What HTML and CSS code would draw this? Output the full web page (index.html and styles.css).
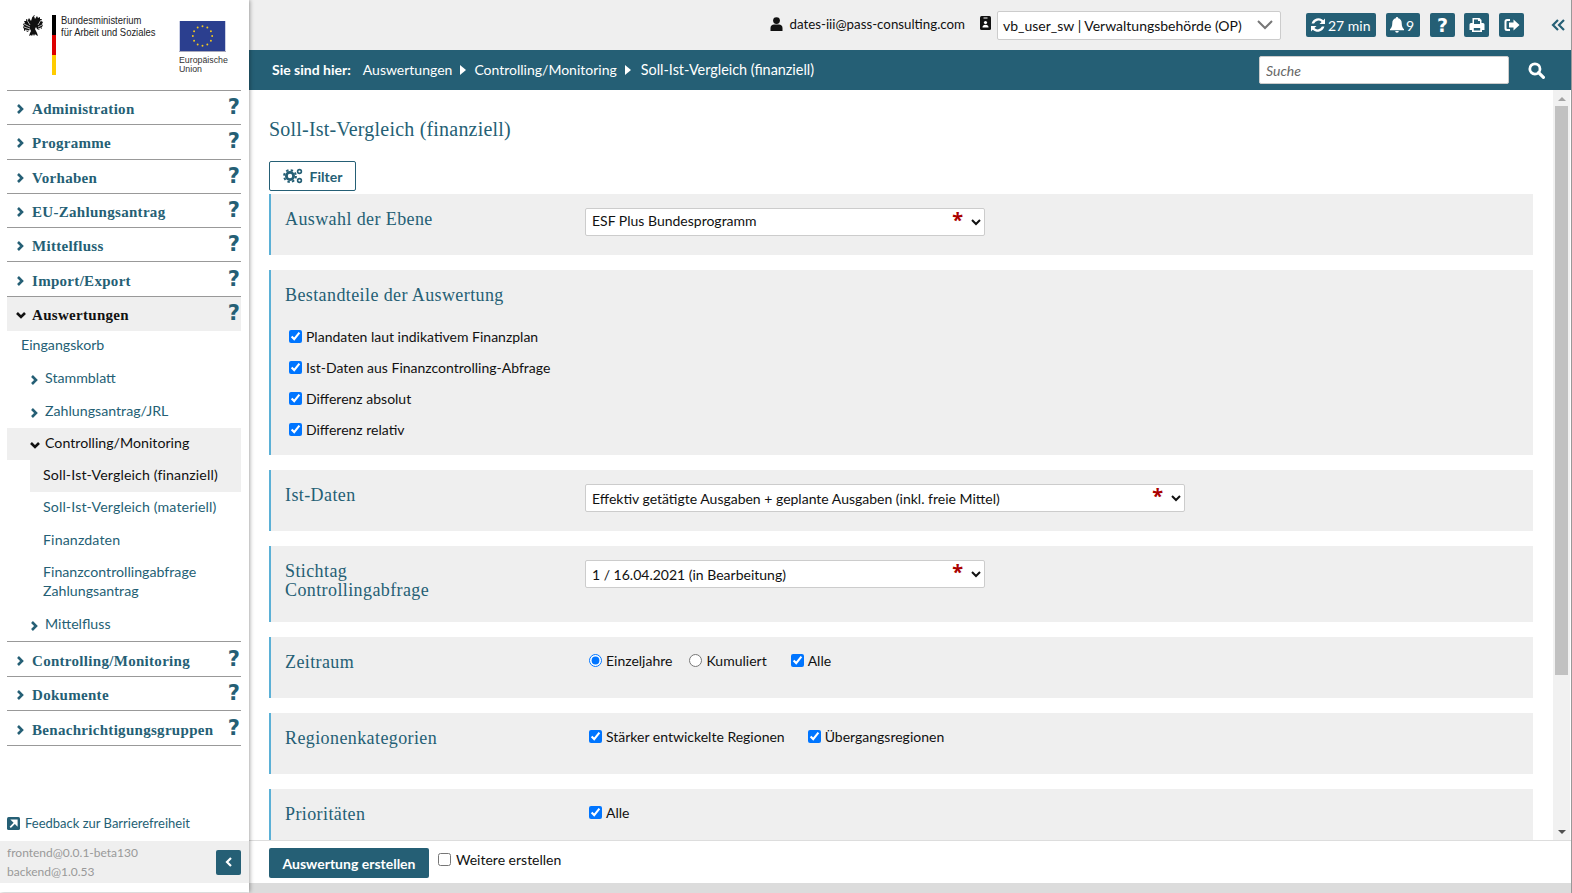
FILE: index.html
```html
<!DOCTYPE html>
<html lang="de">
<head>
  <meta charset="UTF-8">
  <title>Soll-Ist-Vergleich (finanziell)</title>
  <link rel="stylesheet" href="styles.css">
</head>
<body>
<div class="app">

  <!-- Seitenleiste -->
  <aside class="sidebar">
    <div class="logos">
      <div class="logo-bmas">
        <svg class="eagle" viewBox="0 0 24 24" width="24" height="24">
          <path d="M12 1c-1 0-2 1-2 2l-1 3-2-3-1 2-2-1 0 2-2 0 1 2-2 1 1 2-1 1 1 2 0 2 2-1 1 2 2-1 1-2 1 2-1 2-1 3 2-1 1 1 1-2 1 2 1-2 1 1 2 1-1-3-1-2-1-2 1-2 1 2 2 1 1-2 2 1 0-2 1-2-1-1 1-2-2-1 1-2-2 0 0-2-2 1-1-2-2 3-1-3 1-1-2-1z" fill="#111"/>
          <path d="M2 9l6 3M2 12l6 2M3 15l5 1M22 9l-6 3M22 12l-6 2M21 15l-5 1M5 5l3 5M19 5l-3 5" stroke="#fff" stroke-width=".7"/>
        </svg>
        <div class="flagbar"><span class="fb-black"></span><span class="fb-red"></span><span class="fb-gold"></span></div>
        <div class="logo-text">Bundesministerium<br>für Arbeit und Soziales</div>
      </div>
      <div class="logo-eu">
        <svg class="euflag" viewBox="0 0 47 31" width="47" height="31">
          <rect width="47" height="31" fill="#2b3f8f"/>
          <g fill="#f3c81f">
            <circle cx="23.5" cy="5.5" r="1"/><circle cx="28.5" cy="6.8" r="1"/><circle cx="32.2" cy="10.5" r="1"/>
            <circle cx="33.5" cy="15.5" r="1"/><circle cx="32.2" cy="20.5" r="1"/><circle cx="28.5" cy="24.2" r="1"/>
            <circle cx="23.5" cy="25.5" r="1"/><circle cx="18.5" cy="24.2" r="1"/><circle cx="14.8" cy="20.5" r="1"/>
            <circle cx="13.5" cy="15.5" r="1"/><circle cx="14.8" cy="10.5" r="1"/><circle cx="18.5" cy="6.8" r="1"/>
          </g>
        </svg>
        <div class="logo-text-eu">Europäische<br>Union</div>
      </div>
    </div>

    <nav class="menu">
      <div class="menu-row"><svg class="chev" viewBox="0 0 8 10"><path d="M2 1l4 4-4 4" /></svg><a>Administration</a><span class="help">?</span></div>
      <div class="menu-row"><svg class="chev" viewBox="0 0 8 10"><path d="M2 1l4 4-4 4" /></svg><a>Programme</a><span class="help">?</span></div>
      <div class="menu-row"><svg class="chev" viewBox="0 0 8 10"><path d="M2 1l4 4-4 4" /></svg><a>Vorhaben</a><span class="help">?</span></div>
      <div class="menu-row"><svg class="chev" viewBox="0 0 8 10"><path d="M2 1l4 4-4 4" /></svg><a>EU-Zahlungsantrag</a><span class="help">?</span></div>
      <div class="menu-row"><svg class="chev" viewBox="0 0 8 10"><path d="M2 1l4 4-4 4" /></svg><a>Mittelfluss</a><span class="help">?</span></div>
      <div class="menu-row"><svg class="chev" viewBox="0 0 8 10"><path d="M2 1l4 4-4 4" /></svg><a>Import/Export</a><span class="help">?</span></div>
      <div class="menu-row open"><svg class="chev" viewBox="0 0 10 8"><path d="M1 2l4 4 4-4" /></svg><a>Auswertungen</a><span class="help">?</span></div>

      <div class="submenu">
        <div class="sub-plain">Eingangskorb</div>
        <div class="sub-row"><svg class="chev" viewBox="0 0 8 10"><path d="M2 1l4 4-4 4" /></svg>Stammblatt</div>
        <div class="sub-row"><svg class="chev" viewBox="0 0 8 10"><path d="M2 1l4 4-4 4" /></svg>Zahlungsantrag/JRL</div>
        <div class="sub-row active"><svg class="chev" viewBox="0 0 10 8"><path d="M1 2l4 4 4-4" /></svg>Controlling/Monitoring</div>
        <div class="sub-leaf current">Soll-Ist-Vergleich (finanziell)</div>
        <div class="sub-leaf">Soll-Ist-Vergleich (materiell)</div>
        <div class="sub-leaf">Finanzdaten</div>
        <div class="sub-leaf two">Finanzcontrollingabfrage Zahlungsantrag</div>
        <div class="sub-row"><svg class="chev" viewBox="0 0 8 10"><path d="M2 1l4 4-4 4" /></svg>Mittelfluss</div>
      </div>

      <div class="menu-row first-after"><svg class="chev" viewBox="0 0 8 10"><path d="M2 1l4 4-4 4" /></svg><a>Controlling/Monitoring</a><span class="help">?</span></div>
      <div class="menu-row"><svg class="chev" viewBox="0 0 8 10"><path d="M2 1l4 4-4 4" /></svg><a>Dokumente</a><span class="help">?</span></div>
      <div class="menu-row"><svg class="chev" viewBox="0 0 8 10"><path d="M2 1l4 4-4 4" /></svg><a>Benachrichtigungsgruppen</a><span class="help">?</span></div>
    </nav>

    <div class="feedback">
      <svg viewBox="0 0 12 12" width="13" height="13"><rect width="12" height="12" rx="1.5" fill="#255f75"/><path d="M3 9.5L8 4.5M5 3h4v4z" stroke="#fff" stroke-width="1.6" fill="#fff"/></svg>
      Feedback zur Barrierefreiheit
    </div>
    <div class="versions">
      <div class="version-text">frontend@0.0.1-beta130<br>backend@1.0.53</div>
      <button class="collapse"><svg viewBox="0 0 8 10" width="8" height="10"><path d="M6 1L2 5l4 4" fill="none" stroke="#fff" stroke-width="2.2"/></svg></button>
    </div>
  </aside>

  <div class="main">
    <!-- Kopfzeile mit Benutzer und Aktionen -->
    <header class="topbar">
      <svg class="top-icon user" viewBox="0 0 12 14" width="13" height="14"><circle cx="6" cy="3.6" r="3.4" fill="#111"/><path d="M0 14v-3c0-2 1.500-3.500 3.500-3.500h5c2 0 3.500 1.500 3.500 3.500v3z" fill="#111"/></svg>
      <span class="user-mail">dates-iii@pass-consulting.com</span>
      <svg class="top-icon badge" viewBox="0 0 11 14" width="11" height="14"><rect width="11" height="14" rx="1.500" fill="#111"/><rect x="3.500" y="1.500" width="4" height="1" fill="#fff"/><circle cx="5.500" cy="6.500" r="1.600" fill="#fff"/><path d="M2.500 11.500c0-2 1-2.800 3-2.800s3 .8 3 2.800z" fill="#fff"/></svg>
      <div class="role-select"><span>vb_user_sw | Verwaltungsbehörde (OP)</span>
        <svg viewBox="0 0 16 10" width="16" height="10"><path d="M1 1l7 7 7-7" fill="none" stroke="#777" stroke-width="2"/></svg>
      </div>
      <button class="top-btn timer">
        <svg viewBox="0 0 16 16" width="16" height="16"><path d="M13.300 3.300A7 7 0 0 0 1.600 6.400h2.500a4.600 4.600 0 0 1 7.500-1.400L9.500 7H15V1.500zM2.700 12.700A7 7 0 0 0 14.400 9.600h-2.500a4.600 4.600 0 0 1-7.500 1.400L6.500 9H1v5.500z" fill="#fff"/></svg>
        27 min</button>
      <button class="top-btn bell">
        <svg viewBox="0 0 14 16" width="14" height="16"><path d="M7 0a1.200 1.200 0 0 0-1.200 1.300C3.500 1.800 2.300 3.600 2.300 6c0 3.500-1 5-2.300 6.300v.9h14v-.9C12.700 11 11.700 9.500 11.700 6c0-2.400-1.200-4.200-3.500-4.700A1.200 1.200 0 0 0 7 0zM5.200 14a1.800 1.800 0 0 0 3.600 0z" fill="#fff"/></svg>
        9</button>
      <button class="top-btn icon-only q">?</button>
      <button class="top-btn icon-only">
        <svg viewBox="0 0 16 16" width="16" height="16"><path d="M3.500 1h7l2 2v3h1.500A1.500 1.500 0 0 1 15.500 7.500V13H13v2H3v-2H.5V7.500A1.500 1.500 0 0 1 2 6h1.500zM5 2.500V7h6V4h-2V2.500zM4.800 11v2.500h6.400V11z" fill="#fff" fill-rule="evenodd"/></svg>
      </button>
      <button class="top-btn icon-only">
        <svg viewBox="0 0 16 14" width="16" height="14"><path d="M6 1H3a2.500 2.500 0 0 0-2.500 2.500v7A2.500 2.500 0 0 0 3 13h3v-2H3.200a.7.7 0 0 1-.7-.7V3.700a.7.700 0 0 1 .7-.7H6zM9.500 1.500L15.500 7l-6 5.500V9.500H5v-5h4.500z" fill="#fff"/></svg>
      </button>
      <svg class="nav-collapse" viewBox="0 0 15 12" width="15" height="12"><path d="M7 1L2 6l5 5M13 1L8 6l5 5" fill="none" stroke="#255f75" stroke-width="2.200"/></svg>
    </header>

    <div class="crumbbar">
      <strong>Sie sind hier:</strong>
      <span class="crumb">Auswertungen</span><i class="tri"></i>
      <span class="crumb">Controlling/Monitoring</span><i class="tri"></i>
      <span class="crumb last">Soll-Ist-Vergleich (finanziell)</span>
      <input class="search" type="text" placeholder="Suche">
      <svg class="search-icon" viewBox="0 0 16 16" width="17" height="17"><circle cx="6.500" cy="6.500" r="4.800" fill="none" stroke="#fff" stroke-width="2.600"/><path d="M10 10l4.500 4.500" stroke="#fff" stroke-width="3" stroke-linecap="round"/></svg>
    </div>

    <div class="body-row">
      <main class="content">
        <h1>Soll-Ist-Vergleich (finanziell)</h1>
        <button class="filter-btn">
          <svg viewBox="0 0 20 16" width="20" height="16">
            <g fill="none" stroke="#255f75">
              <circle cx="7" cy="8" r="3.600" stroke-width="2.800"/>
              <circle cx="7" cy="8" r="5.900" stroke-width="2" stroke-dasharray="2.400 2.230"/>
              <circle cx="16.500" cy="3.500" r="1.900" stroke-width="1.600"/>
              <circle cx="16.500" cy="12.500" r="1.900" stroke-width="1.600"/>
            </g>
          </svg>
          Filter
        </button>

        <section class="panel first">
          <h2>Auswahl der Ebene</h2>
          <div class="field"><div class="select-wrap"><select class="sel-short"><option>ESF Plus Bundesprogramm</option></select><span class="req">*</span></div></div>
        </section>

        <section class="panel stacked">
          <h2>Bestandteile der Auswertung</h2>
          <label class="check-line"><input type="checkbox" checked>Plandaten laut indikativem Finanzplan</label>
          <label class="check-line"><input type="checkbox" checked>Ist-Daten aus Finanzcontrolling-Abfrage</label>
          <label class="check-line"><input type="checkbox" checked>Differenz absolut</label>
          <label class="check-line"><input type="checkbox" checked>Differenz relativ</label>
        </section>

        <section class="panel">
          <h2>Ist-Daten</h2>
          <div class="field"><div class="select-wrap"><select class="sel-long"><option>Effektiv getätigte Ausgaben + geplante Ausgaben (inkl. freie Mittel)</option></select><span class="req">*</span></div></div>
        </section>

        <section class="panel tall">
          <h2>Stichtag<br>Controllingabfrage</h2>
          <div class="field"><div class="select-wrap"><select class="sel-short"><option>1 / 16.04.2021 (in Bearbeitung)</option></select><span class="req">*</span></div></div>
        </section>

        <section class="panel">
          <h2 class="low">Zeitraum</h2>
          <div class="field inline">
            <label class="opt"><input type="radio" name="zeit" checked>Einzeljahre</label>
            <label class="opt"><input type="radio" name="zeit">Kumuliert</label>
            <label class="opt wide"><input type="checkbox" checked>Alle</label>
          </div>
        </section>

        <section class="panel">
          <h2 class="low">Regionenkategorien</h2>
          <div class="field inline">
            <label class="opt"><input type="checkbox" checked>Stärker entwickelte Regionen</label>
            <label class="opt mid"><input type="checkbox" checked>Übergangsregionen</label>
          </div>
        </section>

        <section class="panel">
          <h2 class="low">Prioritäten</h2>
          <div class="field inline">
            <label class="opt"><input type="checkbox" checked>Alle</label>
          </div>
        </section>
      </main>

      <div class="scrollbar">
        <i class="arrow-up"></i>
        <div class="thumb"></div>
        <i class="arrow-down"></i>
      </div>
    </div>

    <footer class="actions">
      <button class="primary">Auswertung erstellen</button>
      <label class="more"><input type="checkbox">Weitere erstellen</label>
    </footer>
    <div class="bottom-strip"></div>
  </div>
</div>
</body>
</html>
```

FILE: styles.css
```css
* {
  box-sizing: border-box;
}

html, body {
  margin: 0;
  height: 893px;
  overflow: hidden;
}

body {
  font-family: "Lato", sans-serif;
  font-size: 14px;
  color: #111;
  background: #fff;
}

button {
  font-family: inherit;
  border: 0;
  white-space: nowrap;
}

.app {
  display: flex;
  height: 893px;
}

/* Seitenleiste */
.sidebar {
  width: 249px;
  flex: none;
  height: 892px;
  display: flex;
  flex-direction: column;
  background: #fff;
  box-shadow: 1px 0 4px rgba(0, 0, 0, .35);
  position: relative;
  z-index: 2;
}

.logos {
  height: 90px;
  flex: none;
  display: flex;
  padding: 15px 22px 0 22px;
  justify-content: space-between;
}

.logo-bmas {
  display: flex;
  gap: 6px;
}

.flagbar {
  width: 4px;
  height: 60px;
  display: flex;
  flex-direction: column;
}

.flagbar span {
  flex: 1;
}

.fb-black { background: #000; }
.fb-red { background: #d00; }
.fb-gold { background: #fc0; }

.logo-text {
  font-family: "Liberation Sans", sans-serif;
  font-size: 10.500px;
  line-height: 12px;
  transform: scaleX(.9);
  transform-origin: left top;
  white-space: nowrap;
  color: #222;
  margin-left: -1px;
  margin-top: -1px;
}

.logo-eu {
  width: 48px;
  padding-top: 6px;
}

.euflag {
  display: block;
  border-bottom: 1px solid #aab;
}

.logo-text-eu {
  font-family: "Liberation Sans", sans-serif;
  font-size: 8.800px;
  line-height: 9px;
  margin-top: 4px;
  color: #333;
}

.menu {
  margin: 0 8px 0 7px;
  border-top: 1px solid #999;
}

.menu-row {
  height: 34.300px;
  border-bottom: 1px solid #999;
  display: flex;
  align-items: center;
  padding-left: 9px;
  color: #255f75;
}

.menu-row a {
  font-family: "Liberation Serif", serif;
  font-weight: bold;
  font-size: 15px;
  letter-spacing: .3px;
  margin-left: 8px;
  flex: 1;
  padding-top: 4px;
}

.menu-row > .chev {
  margin-top: 3px;
}

.menu-row.open {
  background: #efefef;
  color: #111;
  border-bottom: 0;
}

.menu-row.first-after {
  border-top: 1px solid #999;
  height: 36px;
}

.chev {
  width: 8px;
  height: 10px;
  flex: none;
  fill: none;
  stroke: #255f75;
  stroke-width: 2.600;
}

.open .chev, .active .chev {
  stroke: #111;
  width: 10px;
  height: 8px;
  margin-right: -2px;
}

.help {
  font-family: "DejaVu Sans", sans-serif;
  font-weight: bold;
  font-size: 21px;
  line-height: 1;
  color: #255f75;
  margin-right: 1px;
  margin-top: 0;
}

.submenu {
  color: #255f75;
  font-size: 14.200px;
}

.sub-plain {
  height: 32px;
  padding: 5px 0 0 14px;
}

.sub-row {
  height: 32.300px;
  display: flex;
  align-items: center;
  padding: 0 0 3px 23px;
  gap: 7px;
}

.sub-row .chev {
  margin-top: 5px;
}

.sub-row.active {
  background: #efefef;
  color: #111;
}

.sub-leaf {
  height: 32.300px;
  padding: 6px 14px 0 36px;
  letter-spacing: .12px;
}

.sub-leaf.two {
  height: 52px;
  padding-top: 5px;
  line-height: 19px;
  letter-spacing: 0;
}

.sub-leaf.current {
  background: #efefef;
  color: #111;
  margin-left: 23px;
  padding-left: 13px;
}

.feedback {
  margin-top: auto;
  margin-bottom: 3px;
  display: flex;
  align-items: center;
  gap: 5px;
  padding-left: 7px;
  height: 30px;
  color: #255f75;
  font-size: 13px;
}

.versions {
  height: 42px;
  margin-bottom: 9px;
  background: #efefef;
  display: flex;
  align-items: center;
  justify-content: space-between;
  padding: 0 8px 0 7px;
  color: #999;
  font-size: 12px;
  line-height: 19px;
}

.collapse {
  width: 25px;
  height: 25px;
  border-radius: 2px;
  background: #255f75;
  display: flex;
  align-items: center;
  justify-content: center;
  padding: 0;
  margin-left: auto;
}

/* Hauptbereich */
.main {
  flex: 1;
  min-width: 0;
  display: flex;
  flex-direction: column;
  border-right: 1px solid #999;
}

.topbar {
  height: 50px;
  flex: none;
  background: #efefef;
  display: flex;
  align-items: center;
  padding-right: 5px;
  justify-content: flex-end;
}

.user {
  margin-top: -3px;
}

.user-mail {
  margin: -3px 15px 0 6px;
  font-size: 13.300px;
  white-space: nowrap;
}

.badge {
  margin-top: -5px;
  margin-right: 6px;
}

.top-icon {
  flex: none;
}

.role-select {
  width: 284px;
  height: 29px;
  margin-right: 25px;
  background: #fff;
  border: 1px solid #ccc;
  border-radius: 2px;
  display: flex;
  align-items: center;
  justify-content: space-between;
  padding: 0 7px 0 5px;
  white-space: nowrap;
}

.top-btn {
  height: 24px;
  background: #255f75;
  color: #fff;
  border-radius: 2px;
  font-size: 14px;
  margin-right: 10px;
  display: flex;
  align-items: center;
  gap: 2px;
  padding: 0 4px;
}

.top-btn.timer {
  width: 70px;
}

.top-btn.bell {
  width: 34px;
}

.top-btn.icon-only {
  width: 25px;
  justify-content: center;
  padding: 0;
}

.top-btn.q {
  font-family: "DejaVu Sans", sans-serif;
  font-size: 19px;
  font-weight: bold;
  margin-right: 9px;
}

.nav-collapse {
  margin: 0 0 0 17px;
}

.crumbbar {
  height: 40px;
  flex: none;
  background: #255f75;
  color: #fff;
  display: flex;
  align-items: center;
  padding-left: 23px;
}

.crumbbar strong {
  margin: 0 12px 2px 0;
}

.crumb {
  margin-bottom: 2px;
}

.crumb.last {
  font-size: 14.400px;
  margin-left: 2px;
}

.tri {
  width: 0;
  height: 0;
  border-left: 6px solid #fff;
  border-top: 5px solid transparent;
  border-bottom: 5px solid transparent;
  margin: 0 8px;
}

.search {
  width: 250px;
  height: 28px;
  margin-left: auto;
  border: 1px solid #ccc;
  border-radius: 2px;
  padding: 0 6px;
  font-family: inherit;
  font-size: 14px;
  font-style: italic;
}

.search::placeholder {
  color: #666;
}

.search-icon {
  margin: 0 26px 0 19px;
}

.body-row {
  flex: 1;
  min-height: 0;
  display: flex;
}

.content {
  flex: 1;
  min-width: 0;
  overflow: hidden;
  padding: 0 20px;
}

.content h1 {
  margin: 0;
  padding-top: 28px;
  height: 71px;
  font-family: "Liberation Serif", serif;
  font-weight: normal;
  font-size: 20px;
  letter-spacing: .2px;
  color: #255f75;
}

.filter-btn {
  height: 30px;
  width: 87px;
  display: flex;
  align-items: center;
  justify-content: center;
  gap: 7px;
  background: #fff;
  border: 1px solid #255f75;
  border-radius: 2px;
  color: #255f75;
  font-size: 14px;
  font-weight: bold;
  margin-bottom: 3px;
}

.panel {
  background: #efefef;
  border-left: 2px solid #5bb0d6;
  height: 61px;
  margin-bottom: 15px;
  padding: 14px 0 0 14px;
  display: flex;
}

.panel.stacked {
  height: 185px;
  display: block;
}

.panel.tall {
  height: 76px;
}

.panel h2 {
  margin: 0;
  width: 300px;
  flex: none;
  font-family: "Liberation Serif", serif;
  font-weight: normal;
  font-size: 18px;
  line-height: 19px;
  letter-spacing: .4px;
  color: #255f75;
  padding-top: 2px;
}

.panel.stacked h2 {
  width: auto;
  margin-bottom: 16px;
}

.check-line {
  display: flex;
  align-items: center;
  height: 31px;
  padding-left: 4px;
}

input[type="checkbox"], input[type="radio"] {
  margin: 0 4px 0 0;
}

.select-wrap {
  position: relative;
  display: inline-block;
}

.select-wrap select {
  height: 28px;
  background: #fff;
  border: 1px solid #ccc;
  border-radius: 2px;
  font-family: inherit;
  font-size: 14px;
  padding-left: 2px;
  color: #111;
}

.panel.first select {
  padding-bottom: 3px;
}

.sel-short {
  width: 400px;
}

.sel-long {
  width: 600px;
}

.req {
  position: absolute;
  right: 22px;
  top: -2px;
  font-family: "Noto Sans", sans-serif;
  color: #a00;
  font-size: 20px;
  font-weight: bold;
}

.field.inline {
  display: flex;
  gap: 17px;
  padding: 0 0 0 4px;
}

.opt {
  display: flex;
  align-items: center;
  height: 18px;
}

.opt.wide {
  margin-left: 7px;
}

.opt.mid {
  margin-left: 6px;
}

.scrollbar {
  width: 17px;
  flex: none;
  margin-right: 1px;
  background: #f1f1f1;
  display: flex;
  flex-direction: column;
  align-items: center;
  justify-content: space-between;
  padding: 7px 0 6px;
}

.thumb {
  width: 13px;
  height: 569px;
  background: #c1c1c1;
  margin-bottom: auto;
  margin-top: 5px;
}

.arrow-up {
  width: 0;
  height: 0;
  border-left: 4px solid transparent;
  border-right: 4px solid transparent;
  border-bottom: 4px solid #a3a3a3;
}

.arrow-down {
  width: 0;
  height: 0;
  border-left: 4px solid transparent;
  border-right: 4px solid transparent;
  border-top: 4px solid #505050;
}

.actions {
  height: 43px;
  flex: none;
  border-top: 1px solid #ddd;
  display: flex;
  align-items: center;
  padding-left: 20px;
}

.primary {
  width: 160px;
  height: 30px;
  background: #255f75;
  color: #fff;
  border-radius: 2px;
  font-size: 14px;
  font-weight: bold;
  margin-top: 2px;
}

.more {
  display: flex;
  align-items: center;
  margin: -5px 0 0 9px;
}

.more input {
  margin-right: 5px;
}

.bottom-strip {
  height: 10px;
  flex: none;
  background: #dcdcdc;
}
```
